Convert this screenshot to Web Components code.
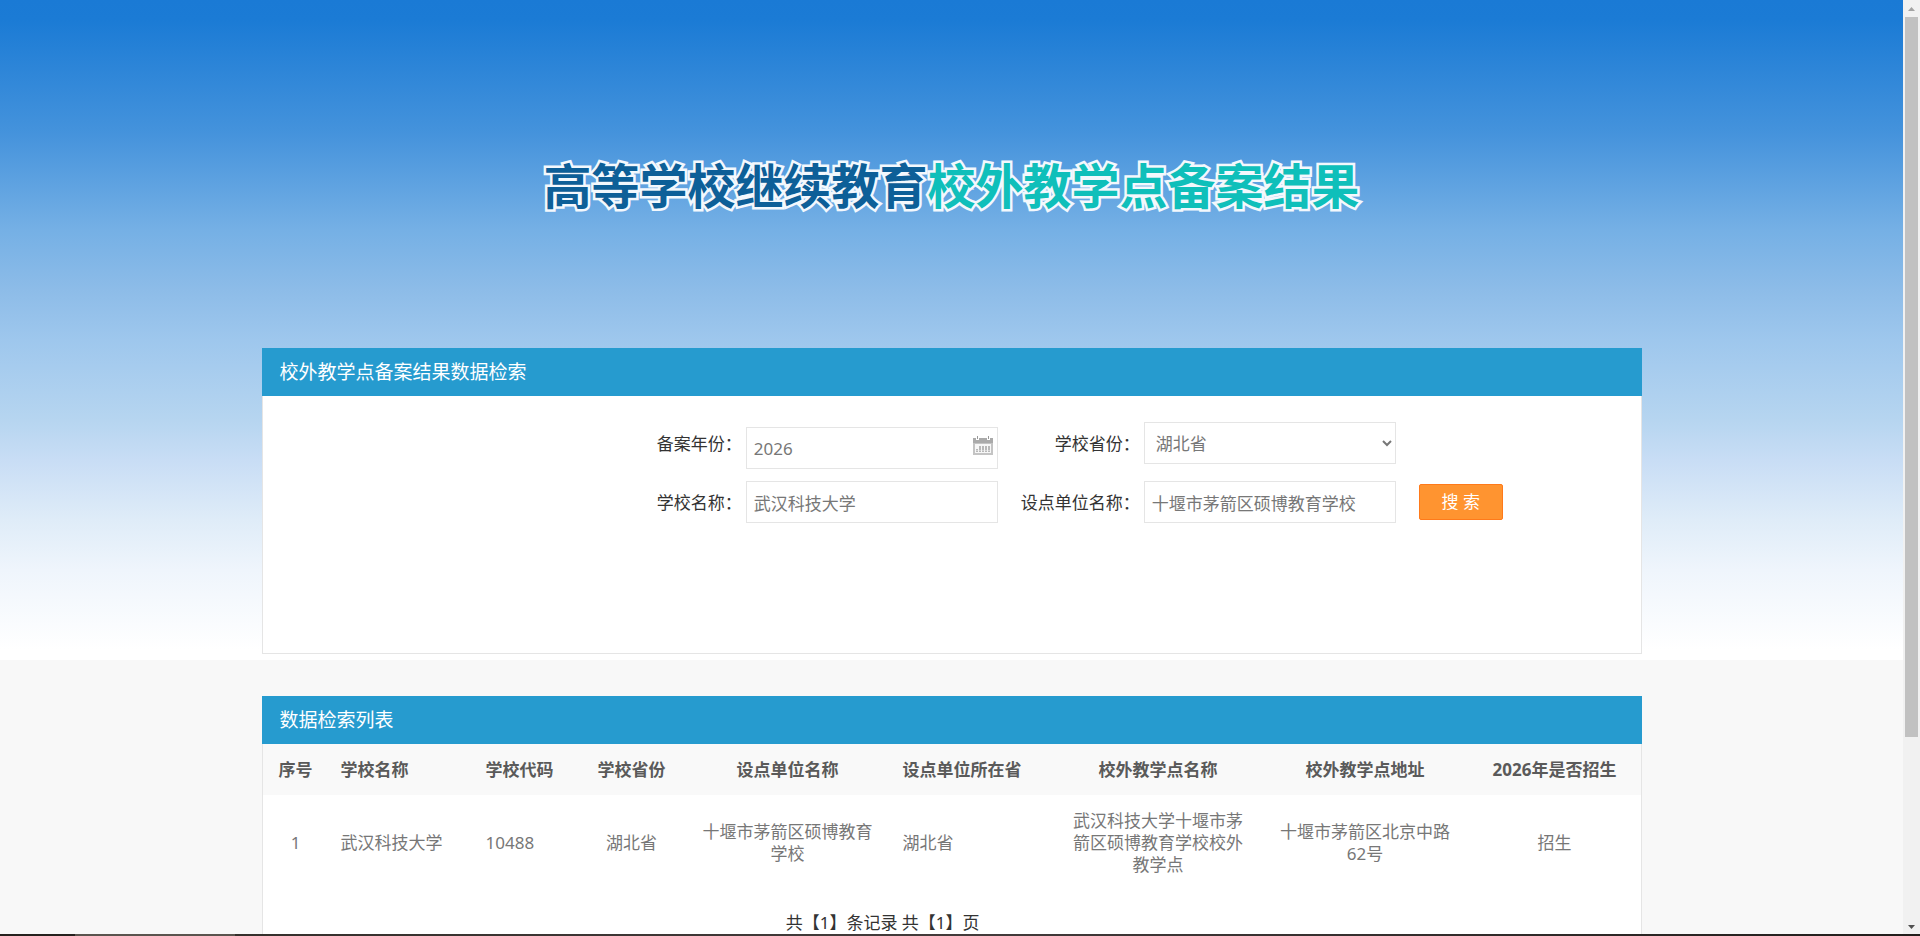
<!DOCTYPE html>
<html lang="zh-CN">
<head>
<meta charset="utf-8">
<title>高等学校继续教育校外教学点备案结果</title>
<style>
html, body {
    height: 100%;
    margin: 0;
}

body {
    overflow: hidden;
    color: #333;
    font: 17px/22px "Noto Sans", "Noto Sans CJK SC", sans-serif;
}
</style>
</head>
<body>
<page-frame>
    <site-banner>
        <span slot="lead">高等学校继续教育</span>
        <span slot="accent">校外教学点备案结果</span>
    </site-banner>
    <data-panel class="search" heading="校外教学点备案结果数据检索">
        <search-form></search-form>
    </data-panel>
    <data-panel heading="数据检索列表">
        <result-table></result-table>
        <record-count records="1" pages="1"></record-count>
    </data-panel>
</page-frame>

<script>
function createTemplate(html) {
    let template = document.createElement("template");
    template.innerHTML = html;
    return template;
}

class BaseElement extends HTMLElement {

    constructor() {
        super();
        this.attachShadow({mode: "open"});
        this.shadowRoot.appendChild(this.constructor.template.content.cloneNode(true));
    }
}

class PageFrame extends BaseElement {

    static template = createTemplate(`
<style>
:host {
    display: flex;
    flex-direction: column;
    height: 100vh;
}

.view {
    display: flex;
    flex: 1;
    min-height: 0;
}

main {
    display: flex;
    flex-direction: column;
    align-items: center;
    flex: 1;
    min-width: 0;
    overflow: hidden;
    background: #f8f8f8 linear-gradient(
        #1a7ad5 0, #1b7bd5 20px, #4593dc 134px, #75b0e5 230px, #8dbce8 290px,
        #9ec7ed 340px, #b6d5f0 420px, #c8ddf5 460px, #dfecf8 520px, #eff5fc 570px,
        #fff 650px) top / 100% 660px no-repeat;
}

::slotted(data-panel) {
    flex: none;
    width: 1380px;
    max-width: 100%;
    margin-bottom: 42px;
}

/* edge of the taskbar */
footer {
    height: 2px;
    background: linear-gradient(to right, #25211e 75px, #5a544e 75px 235px, #35302c 235px, #433b3b 50%, #221e1c);
}
</style>
<div class="view">
    <main><slot></slot></main>
    <scroll-rail></scroll-rail>
</div>
<footer></footer>
`);
}

class ScrollRail extends BaseElement {

    static template = createTemplate(`
<style>
:host {
    display: flex;
    flex-direction: column;
    align-items: center;
    width: 17px;
    background: #f1f1f1;
}

svg {
    display: block;
    width: 17px;
    height: 17px;
}

.track {
    flex: 1;
    width: 13px;
}

.thumb {
    height: 80%;
    background: #c1c1c1;
}
</style>
<svg viewBox="0 0 17 17" aria-hidden="true"><path d="M5 11h7L8.500 7z" fill="#a3a3a3"/></svg>
<div class="track"><div class="thumb"></div></div>
<svg viewBox="0 0 17 17" aria-hidden="true"><path d="M5 8h7L8.500 12z" fill="#505050"/></svg>
`);
}

class SiteBanner extends BaseElement {

    static template = createTemplate(`
<style>
:host {
    display: block;
    flex: none;
    padding: 147px 0 129px;
}

h1 {
    display: flex;
    margin: 0;
    font-family: "Noto Sans CJK SC", sans-serif;
    font-size: 48px;
    font-weight: 700;
    line-height: 72px;
    white-space: nowrap;
    -webkit-text-stroke: 5px #f3f8fd;
    paint-order: stroke fill;
}

.lead {
    color: #0d5f98;
}

.accent {
    color: #0fbfba;
}
</style>
<h1>
    <span class="lead"><slot name="lead"></slot></span>
    <span class="accent"><slot name="accent"></slot></span>
</h1>
`);
}

class DataPanel extends BaseElement {

    static template = createTemplate(`
<style>
:host {
    display: block;
    background: #fff;
}

h2 {
    margin: 0;
    padding: 0 18px;
    background: #269bcf;
    color: #fff;
    font-size: 19px;
    font-weight: 400;
    line-height: 48px;
}

.body {
    border: 1px solid #e5e5e5;
    border-top: 0;
}

:host(.search) .body {
    min-height: 257px;
}
</style>
<h2></h2>
<div class="body"><slot></slot></div>
`);

    get heading() {
        return this.getAttribute("heading");
    }

    set heading(val) {
        this.setAttribute("heading", val);
    }

    connectedCallback() {
        this.shadowRoot.querySelector("h2").textContent = this.heading;
    }
}

class SearchForm extends BaseElement {

    static template = createTemplate(`
<style>
:host {
    display: block;
    padding: 26px 10% 0 0;
}

form {
    display: grid;
    grid-template-columns: auto 252px auto 252px 103px;
    grid-template-rows: 47px 42px;
    gap: 12px 4px;
    justify-content: end;
    align-items: start;
}

label {
    padding-left: 19px;
    text-align: right;
    line-height: 44px;
}

label[for="school"] {
    grid-column: 1;
}

input,
select {
    box-sizing: border-box;
    width: 100%;
    height: 42px;
    margin: 0;
    padding: 0 7px;
    border: 1px solid #e5e5e5;
    border-radius: 0;
    background: #fff;
    color: #777;
    font: inherit;
}

.date {
    display: flex;
    align-items: center;
    align-self: end;
    box-sizing: border-box;
    height: 42px;
    padding-right: 4px;
    border: 1px solid #e5e5e5;
}

.date input {
    flex: 1;
    min-width: 0;
    height: 40px;
    border: 0;
}

.date svg {
    width: 20px;
    height: 24px;
}

button {
    grid-column: 5;
    align-self: center;
    height: 36px;
    margin-left: 19px;
    padding: 0;
    border: 1px solid #ff7a1a;
    border-radius: 2px;
    background: #ff9430;
    color: #fff;
    font: inherit;
}
</style>
<form>
    <label for="year">备案年份：</label>
    <div class="date">
        <input id="year" type="text" value="2026">
        <svg viewBox="0 0 20 24" aria-hidden="true">
            <path d="M0 2h3v2h3V2h8v2h3V2h3v5H0z" fill="#aaa"/>
            <path d="M4 0h1v3H4zM15 0h1v3h-1z" fill="#999"/>
            <path d="M0 7h20v12H0z" fill="#c4c4c4"/>
            <path d="M2 8h16v9H2z" fill="#f7f7f7"/>
            <path d="M3 13h2v3H3zM6 10h2v6H6zM9 10h2v6H9zM12 10h2v6h-2zM15 10h2v6h-2z" fill="#b8b8b8"/>
            <path d="M3 14h14v1H3z" fill="#f0f0f0" opacity=".5"/>
        </svg>
    </div>
    <label for="province">学校省份：</label>
    <select id="province">
        <option>湖北省</option>
    </select>
    <label for="school">学校名称：</label>
    <input id="school" type="text" value="武汉科技大学">
    <label for="unit">设点单位名称：</label>
    <input id="unit" type="text" value="十堰市茅箭区硕博教育学校">
    <button type="submit">搜 索</button>
</form>
`);

    connectedCallback() {
        this.shadowRoot.querySelector("form").addEventListener("submit", function (e) {
            e.preventDefault();
        });
    }
}

class ResultTable extends BaseElement {

    static template = createTemplate(`
<style>
:host {
    display: block;
}

table {
    width: 100%;
    table-layout: fixed;
    border-collapse: collapse;
    text-align: center;
}

th,
td {
    padding: 14px 12px;
}

th {
    height: 23px;
    background: #f9f9f9;
    color: #5a5a5a;
    font-weight: 700;
    white-space: nowrap;
}

td {
    padding: 15px 12px 13px;
    color: #777;
}

.left {
    text-align: left;
}
</style>
<table>
    <colgroup></colgroup>
    <thead><tr></tr></thead>
    <tbody></tbody>
</table>
`);

    static columns = [
        {title: "序号", width: 66},
        {title: "学校名称", width: 145, left: true},
        {title: "学校代码", width: 105, left: true},
        {title: "学校省份", width: 106},
        {title: "设点单位名称", width: 206},
        {title: "设点单位所在省", width: 164, left: true},
        {title: "校外教学点名称", width: 207},
        {title: "校外教学点地址", width: 207},
        {title: "2026年是否招生", width: 172}
    ];

    static rows = [
        [
            "1",
            "武汉科技大学",
            "10488",
            "湖北省",
            "十堰市茅箭区硕博教育学校",
            "湖北省",
            "武汉科技大学十堰市茅箭区硕博教育学校校外教学点",
            "十堰市茅箭区北京中路62号",
            "招生"
        ]
    ];

    connectedCallback() {
        let root = this.shadowRoot;
        let columns = ResultTable.columns;

        for (let column of columns) {
            let col = document.createElement("col");
            col.style.width = column.width + "px";
            root.querySelector("colgroup").appendChild(col);
            root.querySelector("thead tr").appendChild(this._cell("th", column.title, column));
        }

        for (let row of ResultTable.rows) {
            let tr = document.createElement("tr");
            row.forEach((text, i) => tr.appendChild(this._cell("td", text, columns[i])));
            root.querySelector("tbody").appendChild(tr);
        }
    }

    _cell(tag, text, column) {
        let cell = document.createElement(tag);
        cell.textContent = text;
        cell.classList.toggle("left", Boolean(column.left));
        return cell;
    }
}

class RecordCount extends BaseElement {

    static template = createTemplate(`
<style>
:host {
    display: block;
    padding: 23px 10% 22px 0;
    text-align: center;
}
</style>
<span></span>
`);

    connectedCallback() {
        let records = this.getAttribute("records");
        let pages = this.getAttribute("pages");
        this.shadowRoot.querySelector("span").textContent = `共【${records}】条记录 共【${pages}】页`;
    }
}

window.customElements.define("page-frame", PageFrame);
window.customElements.define("scroll-rail", ScrollRail);
window.customElements.define("site-banner", SiteBanner);
window.customElements.define("data-panel", DataPanel);
window.customElements.define("search-form", SearchForm);
window.customElements.define("result-table", ResultTable);
window.customElements.define("record-count", RecordCount);
</script>
</body>
</html>
